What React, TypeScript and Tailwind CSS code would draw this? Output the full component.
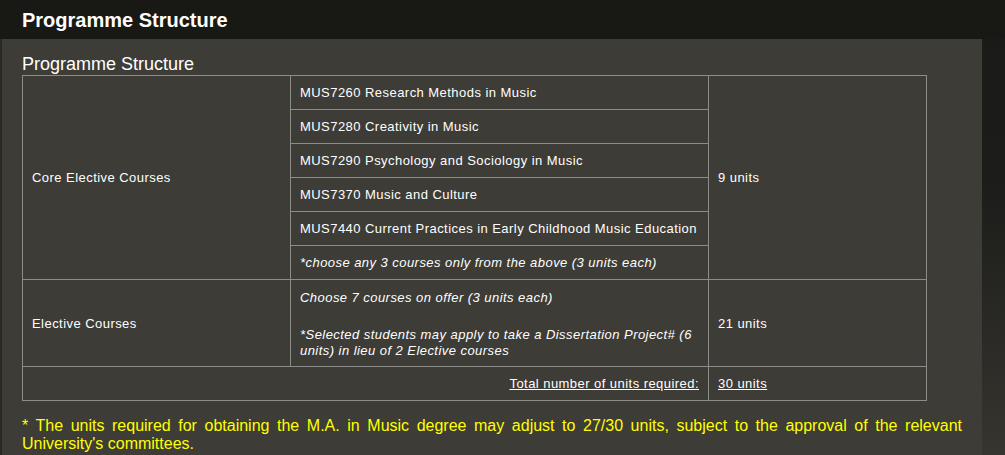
export default function App() {
  const core = [
    "MUS7260 Research Methods in Music",
    "MUS7280 Creativity in Music",
    "MUS7290 Psychology and Sociology in Music",
    "MUS7370 Music and Culture",
    "MUS7440 Current Practices in Early Childhood Music Education",
  ];
  const cell = "border border-[#8c8c88] px-[9px] py-[9px] leading-[15px] align-middle";
  return (
    <div className="w-[1005px] h-[455px] overflow-hidden bg-[linear-gradient(to_bottom,#1a1a18,#1c1c1a_40%,#36352f)] font-['Liberation_Sans',Arial,sans-serif] text-white flex flex-col">
      <div className="h-[39px] bg-[#181814] flex items-center pl-[22px] shrink-0">
        <h1 className="text-[20px] font-bold leading-none">Programme Structure</h1>
      </div>
      <div className="flex flex-1">
        <div className="w-[2px] bg-[#2a2a27]" />
        <div className="w-[980px] bg-[#3d3c37] pl-[20px] pr-[20px] pt-[15px]">
          <h2 className="text-[18px] leading-[20px] mb-[1px]">Programme Structure</h2>
          <table className="border-collapse border border-[#8c8c88] text-[13px] tracking-[0.45px] w-[905px]">
            <tbody>
              <tr>
                <td rowSpan={6} className={`${cell} w-[268px]`}>Core Elective Courses</td>
                <td className={`${cell} w-[418px]`}>{core[0]}</td>
                <td rowSpan={6} className={cell}>9 units</td>
              </tr>
              {core.slice(1).map((c) => (
                <tr key={c}>
                  <td className={cell}>{c}</td>
                </tr>
              ))}
              <tr>
                <td className={`${cell} italic`}>*choose any 3 courses only from the above (3 units each)</td>
              </tr>
              <tr>
                <td className={cell}>Elective Courses</td>
                <td className={`${cell} italic pt-[10px] pb-[7px]`}>
                  <div>Choose 7 courses on offer (3 units each)</div>
                  <div className="mt-[22px] leading-[16px]">
                    *Selected students may apply to take a Dissertation Project# (6 units) in lieu of 2 Elective courses
                  </div>
                </td>
                <td className={cell}>21 units</td>
              </tr>
              <tr>
                <td colSpan={2} className={`${cell} text-right`}>
                  <span className="underline">Total number of units required:</span>
                </td>
                <td className={cell}>
                  <span className="underline">30 units</span>
                </td>
              </tr>
            </tbody>
          </table>
          <p className="mt-[16px] text-[16px] leading-[18px] text-[#ffff00] text-justify w-[940px]">
            * The units required for obtaining the M.A. in Music degree may adjust to 27/30 units, subject to the approval of the relevant University's committees.
          </p>
        </div>
      </div>
    </div>
  );
}
